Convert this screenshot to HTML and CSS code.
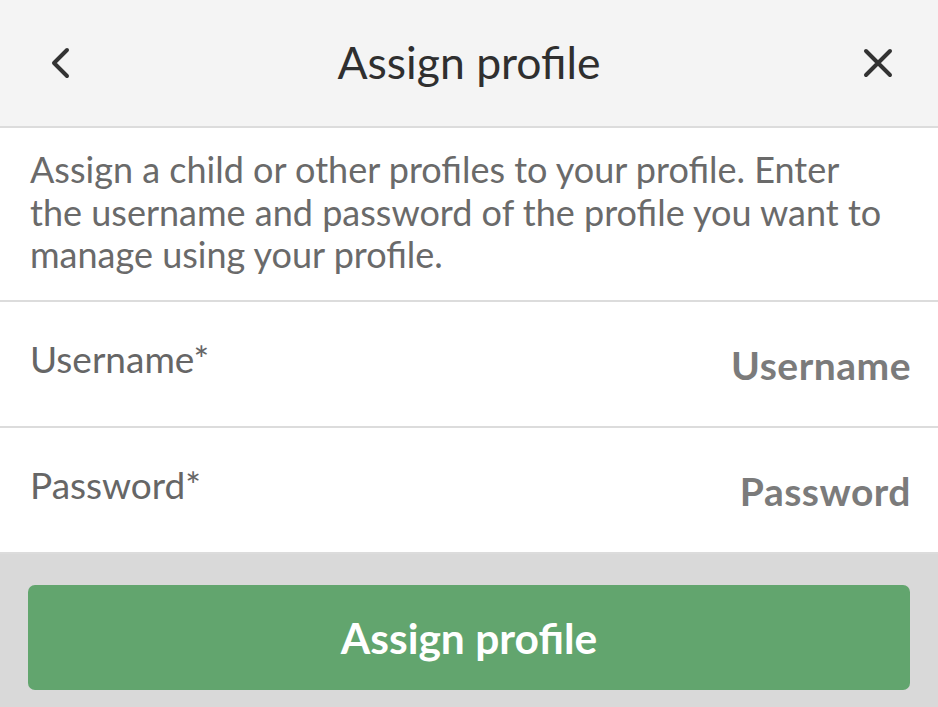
FILE: index.html
```html
<!DOCTYPE html>
<html lang="en">
<head>
<meta charset="utf-8">
<title>Assign profile</title>
<link rel="stylesheet" href="styles.css">
</head>
<body>
<div class="screen">
  <header class="topbar">
    <button class="icon-btn back" aria-label="Back">
      <svg width="22" height="32" viewBox="0 0 22 32"><path d="M17 3 L4 16 L17 29" fill="none" stroke="#333" stroke-width="4" stroke-linecap="round" stroke-linejoin="round"/></svg>
    </button>
    <h1 class="title">Assign profile</h1>
    <button class="icon-btn close" aria-label="Close">
      <svg width="32" height="32" viewBox="0 0 32 32"><path d="M4 4 L28 28 M28 4 L4 28" fill="none" stroke="#333" stroke-width="4" stroke-linecap="round"/></svg>
    </button>
  </header>
  <p class="intro">Assign a child or other profiles to your profile. Enter the username and password of the profile you want to manage using your profile.</p>
  <div class="field">
    <label class="label">Username*</label>
    <span class="placeholder">Username</span>
  </div>
  <div class="field">
    <label class="label">Password*</label>
    <span class="placeholder">Password</span>
  </div>
  <footer class="footer">
    <button class="primary">Assign profile</button>
  </footer>
</div>
</body>
</html>
```
FILE: styles.css
```css
html, body {
  margin: 0;
  padding: 0;
  background: #d9d9d9;
  font-family: Lato, "Open Sans", sans-serif;
}
.screen {
  width: 938px;
  height: 707px;
  display: flex;
  flex-direction: column;
  overflow: hidden;
}
.topbar {
  height: 126px;
  background: #f4f4f4;
  border-bottom: 2px solid #dcdcdc;
  display: flex;
  align-items: center;
  justify-content: space-between;
  padding: 0 44px 0 50px;
  flex-shrink: 0;
}
.icon-btn {
  background: none;
  border: 0;
  padding: 0;
  display: flex;
  align-items: center;
  justify-content: center;
}
.title {
  margin: 0;
  font-size: 44.5px;
  font-weight: 400;
  color: #2f2f2f;
  position: relative;
  left: 2px;
  top: -2px;
}
.intro {
  margin: 0;
  background: #fff;
  padding: 20px 50px 24px 30px;
  font-size: 36px;
  line-height: 42.5px;
  color: #6a6a6a;
  border-bottom: 2px solid #dcdcdc;
  flex-shrink: 0;
}
.field {
  background: #fff;
  height: 124px;
  border-bottom: 2px solid #dcdcdc;
  display: flex;
  align-items: center;
  justify-content: space-between;
  padding: 0 28px 0 30px;
  flex-shrink: 0;
}
.label {
  font-size: 37px;
  color: #666;
  margin-top: -10px;
}
.placeholder {
  font-size: 39px;
  font-weight: 700;
  letter-spacing: 0.5px;
  color: #7b7b7b;
  margin-top: 2px;
  margin-right: -1px;
}
.footer {
  flex: 1;
  background: #d9d9d9;
  padding: 31px 28px 0 28px;
}
.primary {
  width: 100%;
  height: 105px;
  background: #62a56e;
  border: 0;
  border-radius: 7px;
  color: #fff;
  font-family: Lato, "Open Sans", sans-serif;
  font-size: 42.5px;
  font-weight: 700;
}
```
